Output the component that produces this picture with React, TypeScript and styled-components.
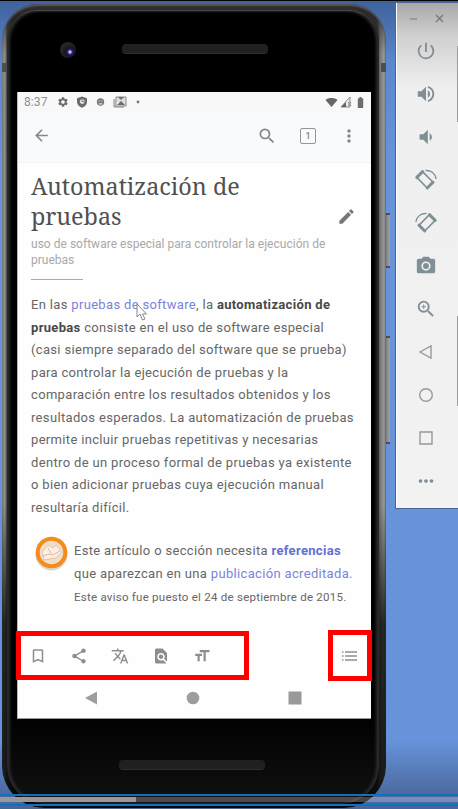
import React from 'react';
import styled, { createGlobalStyle, css } from 'styled-components';
import {
  MdArrowBack, MdSearch, MdMoreVert, MdEdit, MdBookmarkBorder, MdShare, MdTranslate, MdFindInPage,
  MdFormatSize, MdPowerSettingsNew, MdVolumeUp, MdVolumeDown, MdPhotoCamera, MdZoomIn, MdSettings,
  MdMoreHoriz, MdBatteryFull,
} from 'react-icons/md';

const GlobalStyle = createGlobalStyle`
  * { box-sizing: border-box; }
  body { margin: 0; background: #6693d8; font-family: Roboto, sans-serif; overflow: hidden; }
`;

const Desktop = styled.main`
  position: relative;
  display: grid;
  grid-template-columns: 395px 63px;
  width: 458px;
  height: 809px;
  overflow: hidden;
  border-top: 1px solid #000;
  background: linear-gradient(#3e629c 0, #5a87cd 60px, #6693da 160px, #6693da 740px, #4d6ca3 790px, #46659b 100%);
`;

const PhoneArea = styled.div`
  position: relative;
  padding: 3px 0 0 2px;
`;

const Phone = styled.section`
  position: relative;
  width: 384px;
  height: 804px;
  padding: 88px 14px 0 15px;
  border-radius: 36px 36px 42px 42px;
  background:
    linear-gradient(#0000 500px, #0b0b0bcc 620px, #080808e0 100%),
    linear-gradient(#333 0, #3330 50px),
    linear-gradient(90deg, #77797b 0, #8f9091 3px, #3c3c3c 5px, #1b1b1b 9px, #000 12px, #000 364px, #181818 370px, #222 375px, #777 378px, #999 382px, #66696c 384px);
  box-shadow: inset 0 2px 1px #555;
`;

const Glass = styled.div`
  position: absolute;
  inset: 6px 7px 4px 5px;
  border-radius: 31px 31px 38px 38px;
  background: linear-gradient(#000 0, #000 700px, #111 100%);
  border-top: 1px solid #4a4a4a;
  box-shadow: inset 3px 0 3px #2b2b2b, inset -3px 0 3px #2b2b2b;
`;

const Camera = styled.span`
  position: absolute;
  left: 58px;
  top: 38px;
  width: 16px;
  height: 16px;
  border-radius: 50%;
  background: radial-gradient(circle at 10px 10px, #c9b8f8 0 1px, #3b2c80 2.2px, #15102a 4px, #1c1c1f 6px, #252527 8px);
`;

const Grille = styled.span<{ $top: number; $left: number; $width: number }>`
  position: absolute;
  top: ${p => p.$top}px;
  left: ${p => p.$left}px;
  width: ${p => p.$width}px;
  height: 10px;
  border-radius: 4px;
  background: #202020;
  border-bottom: 1px solid #303030;
`;

const Seam = styled.span<{ $right?: boolean }>`
  position: absolute;
  top: 59px;
  ${p => (p.$right ? 'right: 0;' : 'left: 0;')}
  width: 5px;
  height: 9px;
  background: #4c4e50;
`;

const SideButton = styled.span<{ $top: number; $height: number }>`
  position: absolute;
  left: 386px;
  top: ${p => p.$top}px;
  width: 4px;
  height: ${p => p.$height}px;
  border: solid #4b4d50;
  border-width: 2px 0;
  background: linear-gradient(90deg, #7a7c7f, #a6a5a5);
`;

const Screen = styled.article`
  position: relative;
  display: flex;
  flex-direction: column;
  width: 354px;
  height: 627px;
  background: #fefefe;
  border-left: 1px solid #bbb;
  border-bottom: 1px solid #999;
  color: #555;
`;

const StatusBar = styled.header`
  display: flex;
  align-items: center;
  justify-content: space-between;
  height: 20px;
  padding: 0 4px 0 6px;
  background: #f8f8f9;
  font-size: 12px;
  color: #6c6c6c;
`;

const StatusGroup = styled.div<{ $gap: number }>`
  display: flex;
  align-items: center;
  gap: ${p => p.$gap}px;
`;

const Time = styled.time`
  width: 26px;
  letter-spacing: 0.1px;
  color: #8f8f8f;
`;

const AppBar = styled.nav`
  display: flex;
  align-items: center;
  height: 51px;
  padding: 0 12px 3px 14px;
  background: #f9fafb;
  border-bottom: 1px solid #f2f2f2;
  color: #858585;
`;

const AppActions = styled.div`
  display: flex;
  align-items: center;
  margin-left: auto;
  gap: 23px;
`;

const TabCount = styled.span`
  display: grid;
  place-items: center;
  width: 16px;
  height: 16px;
  border: 1.5px solid #959595;
  border-radius: 2px;
  font-size: 9px;
  font-weight: 500;
`;

const TitleRow = styled.div`
  display: flex;
  justify-content: space-between;
  align-items: flex-start;
  height: 72px;
  padding: 8px 15px 0 13px;
  color: #777;
`;

const EditSlot = styled.div`
  display: flex;
  margin-top: 36px;
`;

const Title = styled.h1`
  margin: 0;
  width: 220px;
  font: 400 24px/30px 'Noto Serif', 'DejaVu Serif', serif;
  color: #505050;
  white-space: nowrap;
`;

const TitleLine = styled.span`
  display: block;
  transform: scaleX(0.972);
  transform-origin: left;
`;

const Subtitle = styled.p`
  margin: 0;
  padding: 1px 13px 0;
  font-size: 12px;
  line-height: 16px;
  color: #a9a9a9;
  white-space: nowrap;
`;

const Line = styled.span<{ $spacing?: number }>`
  display: block;
  letter-spacing: ${p => p.$spacing ?? 0}px;
`;

const Rule = styled.hr`
  width: 52px;
  height: 1px;
  margin: 11px 13px 0;
  border: 0;
  background: #aaa;
`;

const Body = styled.p`
  margin: 14px 13px 0;
  font-size: 13px;
  line-height: 22.5px;
  white-space: nowrap;
  color: #666;
`;

const Strong = styled.b`
  font-weight: 700;
  color: #484848;
`;

const Link = styled.a<{ $bold?: boolean }>`
  color: #7b83da;
  ${p => p.$bold && css`font-weight: 700; color: #6270d0;`}
`;

const Notice = styled.aside`
  display: flex;
  gap: 5px;
  margin: 21px 0 0 16px;
  font-size: 13px;
  line-height: 22.8px;
  color: #666;
  white-space: nowrap;
`;

const Badge = styled.svg`
  margin-top: -5px;
`;

const NoticeDate = styled.small`
  display: block;
  font-size: 11.5px;
  letter-spacing: 0.25px;
`;

const Toolbar = styled.footer`
  display: flex;
  align-items: center;
  margin-top: auto;
  height: 42px;
  padding: 0 13px 0 11px;
  color: #8e8e8e;
`;

const ToolGroup = styled.div`
  display: flex;
  gap: 23px;
`;

const TocSlot = styled.div`
  display: flex;
  margin-left: auto;
`;

const NavBar = styled.div`
  display: flex;
  align-items: center;
  justify-content: space-between;
  height: 41px;
  padding: 0 69px 0 66px;
`;

const Highlight = styled.span<{ $left: number; $top: number; $width: number; $height: number }>`
  position: absolute;
  left: ${p => p.$left}px;
  top: ${p => p.$top}px;
  width: ${p => p.$width}px;
  height: ${p => p.$height}px;
  border: 5px solid #fe0000;
`;

const Pointer = styled.svg`
  position: absolute;
  left: 118px;
  top: 211px;
`;

const Emulator = styled.aside`
  height: 507px;
  margin-top: 1px;
  border: 1px solid #4a6593;
  border-right: 0;
  box-shadow: inset 1px 0 #fff;
  background: linear-gradient(#a8a8a8 0, #cfcfcf 32px, #efeff0 84px, #f2f2f3 100%);
  color: #7f8f96;
`;

const WindowControls = styled.div`
  display: flex;
  align-items: center;
  justify-content: space-between;
  height: 27px;
  padding: 3px 14px 0 13px;
`;

const ControlList = styled.div`
  display: grid;
  grid-auto-rows: 43px;
  place-items: center;
  margin-top: -1px;
  padding-right: 2px;
`;

const ScrollMark = styled.span<{ $top: number; $height: number }>`
  position: absolute;
  right: 0;
  top: ${p => p.$top}px;
  width: 1px;
  height: ${p => p.$height}px;
  background: #9b9c9e;
`;

const Progress = styled.div`
  position: absolute;
  left: 0;
  bottom: 3px;
  width: 100%;
  height: 12px;
  padding: 1px 0 2px;
  border: solid #126fbd;
  border-width: 2px 0;
`;

const ProgressTrack = styled.div`
  height: 5px;
  background: #ffffff40;
`;

const ProgressFill = styled.div`
  width: 136px;
  height: 5px;
  background: #999;
`;

function RotateIcon({ mirrored = false }: { mirrored?: boolean }) {
  return (
    <svg width="24" height="24" viewBox="0 0 24 24" fill="none" stroke="currentColor">
      <g transform={mirrored ? 'translate(24 0) scale(-1 1)' : undefined}>
        <path d="m8.6 3.6 10.4 10.6-5.8 5.8L2.8 9.4Z" strokeWidth="1.6" strokeLinejoin="round" />
        <path d="m8.6 3.6-5.8 5.8M19 14.2 13.2 20" strokeWidth="3" strokeLinecap="round" />
        <path d="M11.5 2.6c5.4-.4 9.6 2.8 10.6 8.2" strokeWidth="1.5" />
      </g>
    </svg>
  );
}

export default function App() {
  return (
    <>
      <GlobalStyle />
      <Desktop>
        <PhoneArea>
          <SideButton $top={212} $height={55} />
          <SideButton $top={335} $height={108} />
          <Phone>
            <Glass />
            <Seam /><Seam $right />
            <Camera />
            <Grille $top={40} $left={120} $width={146} />
            <Grille $top={756} $left={117} $width={146} />
            <Screen>
              <StatusBar>
                <StatusGroup $gap={7}>
                  <Time>8:37</Time>
                  <MdSettings size={12} />
                  <svg width="12" height="12" viewBox="0 0 12 12"><path d="m6 .5 5 1.8v3.4c0 2.8-2 5-5 6-3-1-5-3.2-5-6V2.3Z" fill="#6c6c6c" /><circle cx="6.2" cy="5.6" r="2.3" fill="#eee" /><path d="M6 3.5v2.3l2-.5" stroke="#777" fill="none" /></svg>
                  <svg width="11" height="10" viewBox="0 0 11 10"><circle cx="5.5" cy="5" r="3.7" fill="#777" /><path d="M3.6 3.5h1.2v1H3.6zm2.6 0h1.2v1H6.2zM3.7 6.2h3.6v1.3H3.7z" fill="#ddd" /></svg>
                  <svg width="14" height="12" viewBox="0 0 14 12"><path d="M3 1h10v9H3zM1 3v8h10" fill="#ddd" stroke="#888" /><path d="M5 1h6L8 4zM4 9l4-4 4 4z" fill="#6c6c6c" /></svg>
                  <svg width="6" height="6"><circle cx="4" cy="3" r="1.4" fill="#777" /></svg>
                </StatusGroup>
                <StatusGroup $gap={2}>
                  <svg width="13" height="11" viewBox="0 0 13 11"><path d="M.5 3C3.5.4 9.5.4 12.5 3l-6 7Z" fill="#666" /></svg>
                  <svg width="12" height="12" viewBox="0 0 12 12"><path d="M1 11 10 1v10Z" fill="#eee" stroke="#888" /><path d="m1 11 5-5v5z" fill="#666" /><path d="m8 6 3 4m0-4-3 4" stroke="#888" /></svg>
                  <MdBatteryFull size={13} />
                </StatusGroup>
              </StatusBar>
              <AppBar>
                <MdArrowBack size={19} />
                <AppActions>
                  <MdSearch size={20} />
                  <TabCount>1</TabCount>
                  <MdMoreVert size={20} />
                </AppActions>
              </AppBar>
              <TitleRow>
                <Title>
                  <TitleLine>Automatización de</TitleLine>
                  <TitleLine>pruebas</TitleLine>
                </Title>
                <EditSlot><MdEdit size={19} /></EditSlot>
              </TitleRow>
              <Subtitle>
                <Line $spacing={0.02}>uso de software especial para controlar la ejecución de</Line>
                <Line>pruebas</Line>
              </Subtitle>
              <Rule />
              <Body>
                <Line $spacing={0.33}>En las <Link>pruebas de software</Link>, la <Strong>automatización de</Strong></Line>
                <Line $spacing={0.33}><Strong>pruebas</Strong> consiste en el uso de software especial</Line>
                <Line $spacing={0.33}>(casi siempre separado del software que se prueba)</Line>
                <Line $spacing={0.33}>para controlar la ejecución de pruebas y la</Line>
                <Line $spacing={0.33}>comparación entre los resultados obtenidos y los</Line>
                <Line $spacing={0.34}>resultados esperados. La automatización de pruebas</Line>
                <Line $spacing={0.33}>permite incluir pruebas repetitivas y necesarias</Line>
                <Line $spacing={0.34}>dentro de un proceso formal de pruebas ya existente</Line>
                <Line $spacing={0.34}>o bien adicionar pruebas cuya ejecución manual</Line>
                <Line $spacing={0.33}>resultaría difícil.</Line>
              </Body>
              <Notice>
                <Badge width="35" height="38" viewBox="0 0 35 38">
                  <ellipse cx="17.5" cy="19.5" rx="16" ry="16" fill="#ddd6d0" />
                  <circle cx="17.5" cy="17.5" r="13.8" fill="#f1dfcd" stroke="#f58b1c" strokeWidth="4" />
                  <path d="m8 17 6-7 5 3 3-3 6 7-6 6-12 2Z" fill="#f7efe8" stroke="#efc09b" />
                  <path d="m9 21 6-2 4 1 7-4m-12-3 3 5" fill="none" stroke="#eab791" />
                </Badge>
                <div>
                  <Line $spacing={0.33}>Este artículo o sección necesita <Link $bold>referencias</Link></Line>
                  <Line $spacing={0.33}>que aparezcan en una <Link>publicación acreditada.</Link></Line>
                  <NoticeDate>Este aviso fue puesto el 24 de septiembre de 2015.</NoticeDate>
                </div>
              </Notice>
              <Toolbar>
                <ToolGroup>
                  <MdBookmarkBorder size={18} /><MdShare size={18} /><MdTranslate size={18} /><MdFindInPage size={18} /><MdFormatSize size={18} />
                </ToolGroup>
                <TocSlot>
                  <svg width="17" height="14" viewBox="0 0 17 14" stroke="#aaa"><path d="M1 3h1.5M1 7h1.5M1 11h1.5M4 3h12M4 7h12M4 11h12" strokeWidth="2.2" /></svg>
                </TocSlot>
              </Toolbar>
              <NavBar>
                <svg width="14" height="14"><path d="M1 7 13 .5v13Z" fill="#9d9d9d" /></svg>
                <svg width="14" height="14"><circle cx="7" cy="7" r="6.3" fill="#9d9d9d" /></svg>
                <svg width="14" height="14"><path d="M.5 .5h13v13H.5z" fill="#999" /></svg>
              </NavBar>
              <Pointer width="12" height="19" viewBox="0 0 12 19"><path d="M1 1v13l3-3 2.5 6 2.5-1-2.5-5h4Z" fill="#fff" stroke="#888" /></Pointer>
            </Screen>
          </Phone>
          <Highlight $left={16} $top={630} $width={233} $height={49} />
          <Highlight $left={328} $top={629} $width={44} $height={51} />
        </PhoneArea>
        <Emulator>
          <WindowControls>
            <svg width="9" height="9"><path d="M1 5h7" stroke="#777" /></svg>
            <svg width="9" height="9"><path d="m1 1 7 7m0-7L1 8" stroke="#777" strokeWidth="1.3" /></svg>
          </WindowControls>
          <ControlList>
            <MdPowerSettingsNew size={22} />
            <MdVolumeUp size={22} />
            <MdVolumeDown size={22} />
            <RotateIcon />
            <RotateIcon mirrored />
            <MdPhotoCamera size={22} />
            <MdZoomIn size={22} />
            <svg width="16" height="16" fill="none" stroke="#999" strokeWidth="1.4"><path d="m2 8 11-6v12Z" /></svg>
            <svg width="16" height="16" fill="none" stroke="#999" strokeWidth="1.4"><circle cx="8" cy="8" r="6.3" /></svg>
            <svg width="16" height="16" fill="none" stroke="#999" strokeWidth="1.4"><path d="M2 2h12v12H2z" /></svg>
            <MdMoreHoriz size={22} />
          </ControlList>
        </Emulator>
        <ScrollMark $top={45} $height={76} />
        <ScrollMark $top={315} $height={90} />
        <Progress><ProgressTrack><ProgressFill /></ProgressTrack></Progress>
      </Desktop>
    </>
  );
}
